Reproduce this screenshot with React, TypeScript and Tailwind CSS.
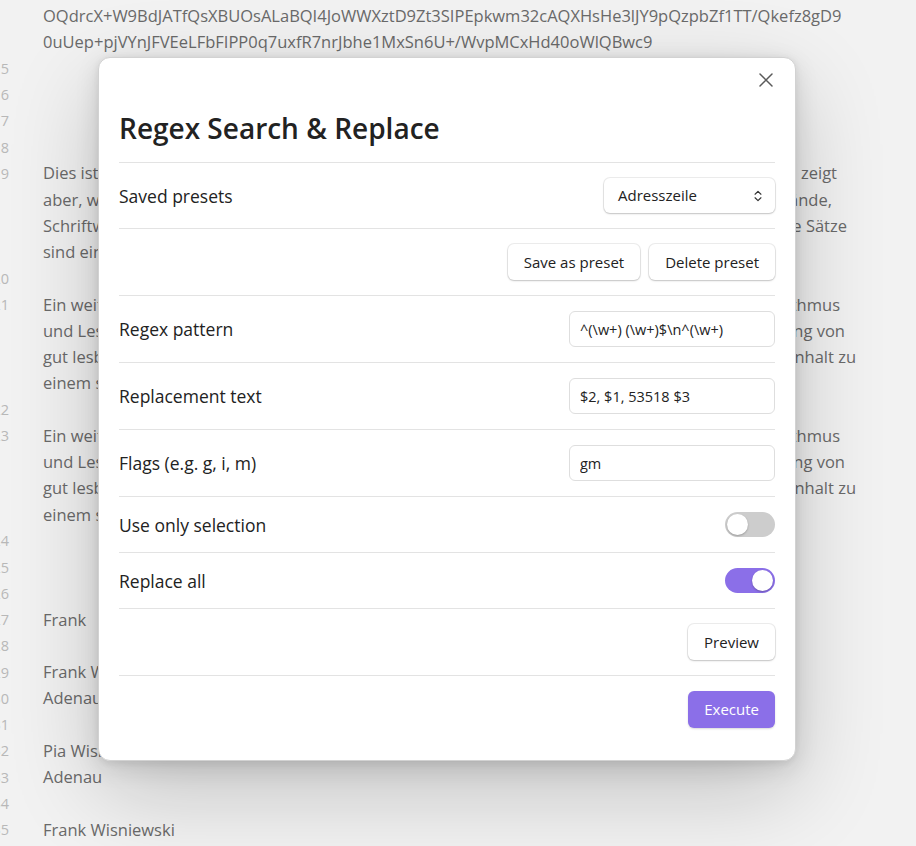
import { ChevronsUpDown } from 'lucide-react';

type BgLine = { num?: string; left?: string; right?: string; w?: string };

const para21: BgLine[] = [
  { left: 'Ein weiterer Absatz dient dazu,', right: 'Satzbau und Rhythmus', w: 'w-[797px]' },
  { left: 'und Lesbarkeit zu prüfen,', right: 'die Darstellung von', w: 'w-[802px]' },
  { left: 'gut lesbarem Text und', right: 'den Inhalt zu', w: 'w-[813px]' },
  { left: 'einem sinnvollen Ganzen zu verbinden.' },
];

const bgLines: BgLine[] = [
  { left: 'OQdrcX+W9BdJATfQsXBUOsALaBQI4JoWWXztD9Zt3SIPEpkwm32cAQXHsHe3lJY9pQzpbZf1TT/Qkefz8gD9' },
  { left: '0uUep+pjVYnJFVEeLFbFIPP0q7uxfR7nrJbhe1MxSn6U+/WvpMCxHd40oWlQBwc9' },
  { num: '15' },
  { num: '16' },
  { num: '17' },
  { num: '18' },
  { num: '19', left: 'Dies ist ein kurzer Beispieltext, der', right: 'den Aufbau zeigt', w: 'w-[794px]' },
  { left: 'aber, wie ein Absatz mit', right: 'Zeilen und Abstände,', w: 'w-[789px]' },
  { left: 'Schriftwahl und Farben', right: 'und kurze Sätze', w: 'w-[804px]' },
  { left: 'sind ein Teil davon.' },
  { num: '20' },
  { num: '21', ...para21[0] },
  ...para21.slice(1),
  { num: '22' },
  { num: '23', ...para21[0] },
  ...para21.slice(1),
  { num: '24' },
  { num: '25' },
  { num: '26' },
  { num: '27', left: 'Frank' },
  { num: '28' },
  { num: '29', left: 'Frank Wisniewski' },
  { num: '30', left: 'Adenau' },
  { num: '31' },
  { num: '32', left: 'Pia Wisniewski' },
  { num: '33', left: 'Adenau' },
  { num: '34' },
  { num: '35', left: 'Frank Wisniewski' },
];

const softShadow = 'shadow-[0_0_0_1px_rgba(0,0,0,0.07),0_1px_2px_rgba(0,0,0,0.18)]';

function Row({ children }: { children: React.ReactNode }) {
  return (
    <div className="flex items-center justify-between border-t border-[#e3e3e3] py-[15px]">
      {children}
    </div>
  );
}

function Label({ children }: { children: React.ReactNode }) {
  return <div className="text-[17.5px] leading-[24px] text-[#222]">{children}</div>;
}

function TextField({ value }: { value: string }) {
  return (
    <input
      readOnly
      value={value}
      className="h-[36px] w-[206px] rounded-[6px] border border-[#dedede] bg-white px-[10px] text-[14.5px] text-[#222] outline-none"
    />
  );
}

function Toggle({ on }: { on: boolean }) {
  return (
    <div
      className={`flex h-[25px] w-[50px] items-center rounded-full p-[2px] ${
        on ? 'justify-end bg-[#8b6fe8]' : 'justify-start bg-[#cdcdcd]'
      }`}
    >
      <div className="h-[21px] w-[21px] rounded-full bg-white shadow-[0_1px_2px_rgba(0,0,0,0.25)]" />
    </div>
  );
}

function Button({ children }: { children: React.ReactNode }) {
  return (
    <button className={`h-[36px] rounded-[6px] bg-white px-[16px] text-[15px] text-[#222] ${softShadow}`}>
      {children}
    </button>
  );
}

export default function App() {
  return (
    <div className="relative h-[846px] w-[916px] overflow-hidden bg-[#f2f2f2] font-['Open_Sans',sans-serif]">
      {/* editor behind the modal */}
      <div className="pt-[3px]">
        {bgLines.map((line, i) => (
          <div key={i} className="flex h-[26.25px] items-center">
            <div className="flex w-[9px] shrink-0 justify-end text-[14.5px] text-[#b8b8b8]">{line.num}</div>
            <div
              className={`ml-[34px] flex justify-between whitespace-nowrap text-[16.5px] text-[#6a6a6a] ${line.w ?? ''}`}
            >
              <span>{line.left}</span>
              {line.right && <span>{line.right}</span>}
            </div>
          </div>
        ))}
      </div>

      {/* modal */}
      <div className="absolute left-[98px] top-[57px] w-[698px] rounded-[12px] border border-[#d2d2d2] bg-white px-[20px] pb-[32px] pt-[52px] shadow-[0_1.8px_7.3px_rgba(0,0,0,0.07),0_6.3px_24.7px_rgba(0,0,0,0.11),0_30px_90px_rgba(0,0,0,0.2)]">
        <button className="absolute right-[22px] top-[15px] flex h-[14px] w-[14px] items-center justify-center text-[#5a5a5a]">
          <svg width="14" height="14" viewBox="0 0 14 14" fill="none" stroke="currentColor" strokeWidth="1.5" strokeLinecap="round">
            <path d="M1 1l12 12M13 1L1 13" />
          </svg>
        </button>

        <h2 className="pb-[16px] text-[28px] font-semibold leading-[36px] text-[#222]">Regex Search &amp; Replace</h2>

        <Row>
          <Label>Saved presets</Label>
          <div
            className={`flex h-[35px] w-[171px] items-center justify-between rounded-[6px] bg-white pl-[14px] pr-[10px] text-[15px] text-[#222] ${softShadow}`}
          >
            <span>Adresszeile</span>
            <ChevronsUpDown size={14} strokeWidth={2} className="text-[#333]" />
          </div>
        </Row>

        <div className="flex items-center justify-end gap-[9px] border-t border-[#e3e3e3] py-[15px]">
          <Button>Save as preset</Button>
          <Button>Delete preset</Button>
        </div>

        <Row>
          <Label>Regex pattern</Label>
          <TextField value="^(\w+) (\w+)$\n^(\w+)" />
        </Row>

        <Row>
          <Label>Replacement text</Label>
          <TextField value="$2, $1, 53518 $3" />
        </Row>

        <Row>
          <Label>Flags (e.g. g, i, m)</Label>
          <TextField value="gm" />
        </Row>

        <Row>
          <Label>Use only selection</Label>
          <Toggle on={false} />
        </Row>

        <Row>
          <Label>Replace all</Label>
          <Toggle on />
        </Row>

        <div className="flex justify-end border-t border-[#e3e3e3] py-[15px]">
          <Button>Preview</Button>
        </div>

        <div className="flex justify-end border-t border-[#e3e3e3] pt-[15px]">
          <button className="h-[37px] rounded-[6px] bg-[#8b6fe8] px-[16px] text-[15px] text-white shadow-[0_1px_2px_rgba(0,0,0,0.15)]">
            Execute
          </button>
        </div>
      </div>
    </div>
  );
}
